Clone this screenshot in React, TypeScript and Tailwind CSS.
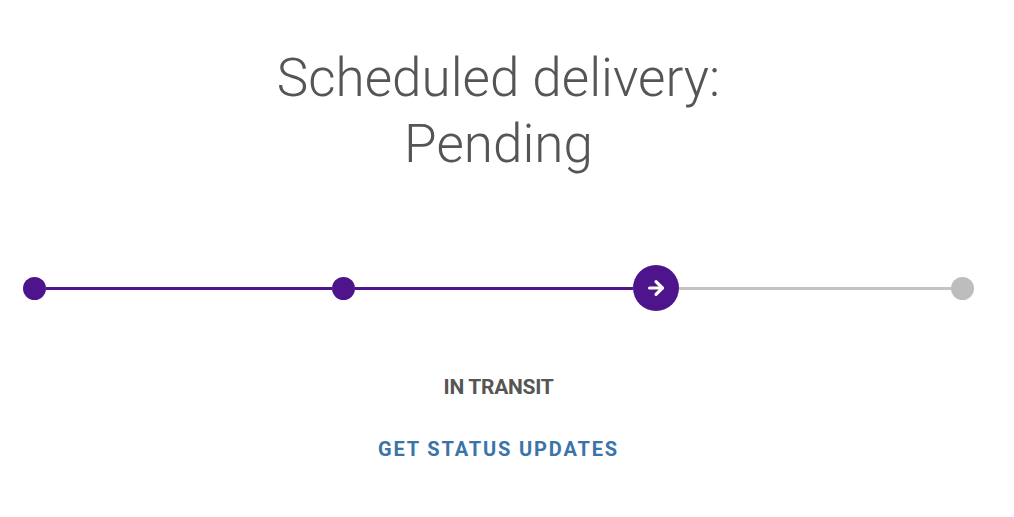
import { ArrowRight } from 'lucide-react';

export default function App() {
  return (
    <main className="min-h-screen bg-white font-['Roboto',sans-serif]">
      <div className="w-[997px] pt-[45px]">
        <h1 className="text-center text-[53px] leading-[66px] font-light text-[#555]">
          Scheduled delivery:
          <br />
          Pending
        </h1>

        <div className="mt-[88px] flex items-center px-[23px]">
          <span className="h-[23px] w-[23px] shrink-0 rounded-full bg-[#4d148c]" />
          <span className="h-[3px] w-[286px] shrink-0 bg-[#4d148c]" />
          <span className="h-[23px] w-[23px] shrink-0 rounded-full bg-[#4d148c]" />
          <span className="h-[3px] w-[278px] shrink-0 bg-[#4d148c]" />
          <span className="flex h-[46px] w-[46px] shrink-0 items-center justify-center rounded-full bg-[#4d148c]">
            <ArrowRight className="h-[22px] w-[22px] text-white" strokeWidth={3.5} />
          </span>
          <span className="h-[3px] flex-1 bg-[#c4c4c4]" />
          <span className="h-[23px] w-[23px] shrink-0 rounded-full bg-[#bdbdbd]" />
        </div>

        <p className="mt-[61px] text-center text-[21px] leading-[31px] font-bold tracking-[-0.3px] text-[#555]">
          IN TRANSIT
        </p>
        <p className="mt-[31px] text-center text-[20px] leading-[30px] font-bold tracking-[1.85px]">
          <a className="text-[#3a74a8]" href="#">
            GET STATUS UPDATES
          </a>
        </p>
      </div>
    </main>
  );
}
